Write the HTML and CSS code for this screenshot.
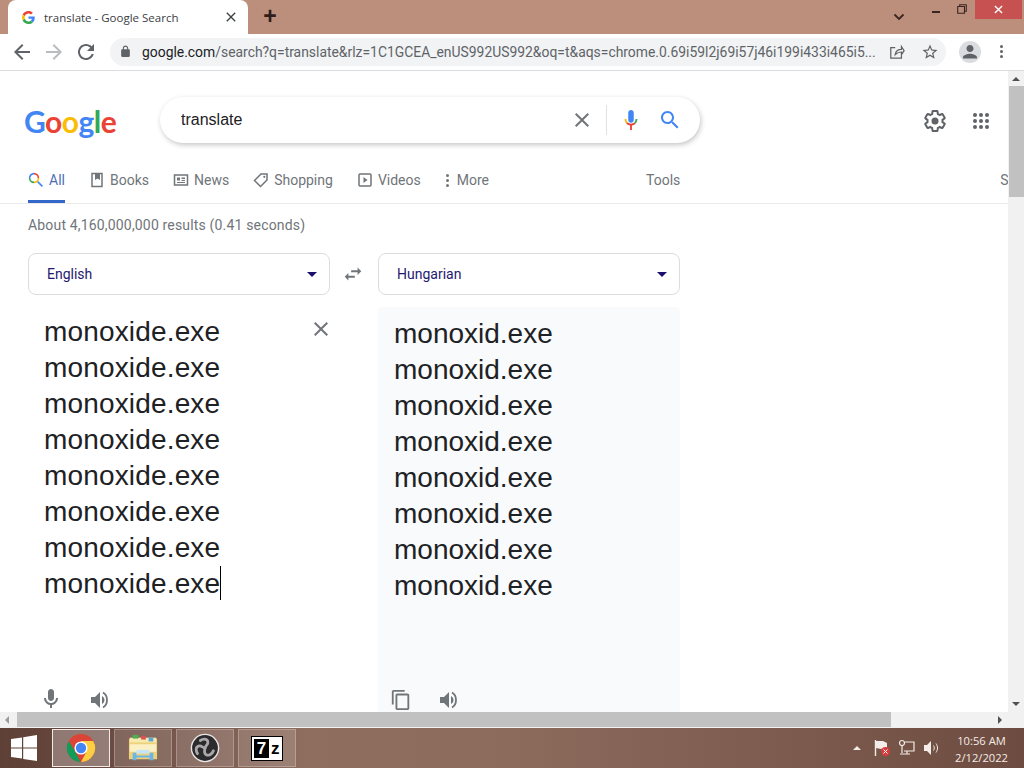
FILE: index.html
```html
<!DOCTYPE html>
<html lang="en">
<head>
  <meta charset="UTF-8" />
  <title>translate - Google Search</title>
  <link rel="stylesheet" href="styles.css">
</head>
<body>
  <svg class="sprite" width="0" height="0">
    <symbol id="i-back" viewBox="0 0 24 24"><path d="M20 11H7.83l5.59-5.59L12 4l-8 8 8 8 1.41-1.41L7.83 13H20v-2z"/></symbol>
    <symbol id="i-reload" viewBox="0 0 24 24"><path d="M17.65 6.35C16.2 4.9 14.21 4 12 4c-4.42 0-7.99 3.58-7.99 8s3.57 8 7.99 8c3.73 0 6.84-2.55 7.73-6h-2.08c-.82 2.33-3.04 4-5.65 4-3.31 0-6-2.69-6-6s2.69-6 6-6c1.66 0 3.14.69 4.22 1.78L13 11h7V4l-2.35 2.35z"/></symbol>
    <symbol id="i-lock" viewBox="0 0 24 24"><path d="M18 8h-1V6c0-2.76-2.24-5-5-5S7 3.24 7 6v2H6c-1.1 0-2 .9-2 2v10c0 1.1.9 2 2 2h12c1.1 0 2-.9 2-2V10c0-1.1-.9-2-2-2zM9 6c0-1.66 1.34-3 3-3s3 1.34 3 3v2H9V6z"/></symbol>
    <symbol id="i-star" viewBox="0 0 24 24"><path d="M22 9.24l-7.19-.62L12 2 9.19 8.63 2 9.24l5.46 4.73L5.82 21 12 17.27 18.18 21l-1.63-7.03L22 9.24zM12 15.4l-3.76 2.27 1-4.28-3.32-2.88 4.38-.38L12 6.1l1.71 4.04 4.38.38-3.32 2.88 1 4.28L12 15.4z"/></symbol>
    <symbol id="i-close" viewBox="0 0 24 24"><path d="M19 6.41L17.59 5 12 10.59 6.41 5 5 6.41 10.59 12 5 17.59 6.41 19 12 13.41 17.59 19 19 17.59 13.41 12 19 6.41z"/></symbol>
    <symbol id="i-search" viewBox="0 0 24 24"><path d="M15.5 14h-.79l-.28-.27C15.41 12.59 16 11.11 16 9.5 16 5.91 13.09 3 9.5 3S3 5.91 3 9.5 5.91 16 9.5 16c1.61 0 3.09-.59 4.23-1.57l.27.28v.79l5 4.99L20.49 19l-4.99-5zm-6 0C7.01 14 5 11.99 5 9.5S7.01 5 9.5 5 14 7.01 14 9.5 11.99 14 9.5 14z"/></symbol>
    <symbol id="i-mic" viewBox="0 0 24 24"><path d="M12 14c1.66 0 3-1.34 3-3V5c0-1.66-1.34-3-3-3S9 3.34 9 5v6c0 1.66 1.34 3 3 3z"/><path d="M17 11c0 2.76-2.24 5-5 5s-5-2.24-5-5H5c0 3.53 2.61 6.43 6 6.92V21h2v-3.08c3.39-.49 6-3.39 6-6.92h-2z"/></symbol>
    <symbol id="i-volume" viewBox="2 3 18 18"><path d="M3 9v6h4l5 5V4L7 9H3zm13.500 3c0-1.770-1.020-3.290-2.500-4.030v8.050c1.480-.73 2.500-2.250 2.500-4.020z"/><path d="M15 4.500c2.800 1.600 4 4.300 4 7.500s-1.200 5.900-4 7.500" fill="none" stroke="#70757a" stroke-width="1.800"/></symbol>
    <symbol id="i-copy" viewBox="0 0 24 24"><path d="M16 1H4c-1.1 0-2 .9-2 2v14h2V3h12V1zm3 4H8c-1.1 0-2 .9-2 2v14c0 1.1.9 2 2 2h11c1.1 0 2-.9 2-2V7c0-1.1-.9-2-2-2zm0 16H8V7h11v14z"/></symbol>
    <symbol id="i-swap" viewBox="0 0 24 24"><path d="M6.99 11L3 15l3.99 4v-3H14v-2H6.99v-3zM21 9l-4-4v3h-7v2h7v3l4-4z"/></symbol>
  </svg>

  <div class="tabstrip">
    <div class="tab">
      <svg class="favicon" viewBox="0 0 48 48">
        <path fill="#EA4335" d="M24 9.500c3.500 0 6.700 1.200 9.200 3.600l6.900-6.900C35.900 2.400 30.500 0 24 0 14.600 0 6.500 5.400 2.600 13.200l8 6.200C12.400 13.700 17.700 9.500 24 9.500z"/>
        <path fill="#4285F4" d="M47 24.500c0-1.600-.1-3.100-.4-4.500H24v9h12.900c-.6 3-2.200 5.500-4.700 7.200l7.700 6C44.400 37.900 47 31.800 47 24.500z"/>
        <path fill="#FBBC05" d="M10.500 28.600c-.5-1.400-.8-3-.8-4.600s.3-3.200.8-4.600l-8-6.200C.9 16.500 0 20.100 0 24s.9 7.500 2.600 10.800l7.900-6.200z"/>
        <path fill="#34A853" d="M24 48c6.500 0 11.900-2.100 15.900-5.800l-7.700-6c-2.100 1.400-4.900 2.300-8.200 2.300-6.300 0-11.600-4.200-13.500-9.900l-8 6.200C6.500 42.600 14.600 48 24 48z"/>
      </svg>
      <span class="tab-title">translate - Google Search</span>
      <svg class="tab-close"><use href="#i-close"/></svg>
    </div>
    <div class="new-tab">+</div>
    <div class="window-btns">
      <svg class="tab-menu" viewBox="0 0 12 8"><path d="M1.500 1.500L6 6l4.500-4.500" fill="none" stroke="#3a2520" stroke-width="1.800"/></svg>
      <div class="win-min"></div>
      <svg class="win-max" viewBox="0 0 11 11"><path d="M3 2.500V.8h7.200V8H8.300M.8 2.800h7.400V10.200H.8z" fill="none" stroke="#3a2520" stroke-width="1.200"/></svg>
      <div class="win-close"><svg viewBox="0 0 10 10"><path d="M1 1l8 8M9 1l-8 8" stroke="#fff" stroke-width="1.500"/></svg></div>
    </div>
  </div>

  <div class="toolbar">
    <svg class="tool-icon"><use href="#i-back"/></svg>
    <svg class="tool-icon faded flip"><use href="#i-back"/></svg>
    <svg class="tool-icon"><use href="#i-reload"/></svg>
    <div class="omnibox">
      <svg class="lock"><use href="#i-lock"/></svg>
      <span class="url"><b>google.com</b>/search?q=translate&amp;rlz=1C1GCEA_enUS992US992&amp;oq=t&amp;aqs=chrome.0.69i59l2j69i57j46i199i433i465i5...</span>
      <svg class="share" viewBox="0 0 18 18"><path d="M7 4H2v12h12v-3M7 12c.5-4 3-6 7-6V3l3 4.500L14 12V9c-3 0-5 1-7 3z" fill="none" stroke="#5f6368" stroke-width="1.400"/></svg>
      <svg class="star"><use href="#i-star"/></svg>
    </div>
    <div class="avatar"><svg viewBox="0 0 20 20"><path d="M10 10c1.800 0 3.200-1.400 3.200-3.200S11.800 3.600 10 3.600 6.800 5 6.800 6.800 8.200 10 10 10zm0 1.600c-2.100 0-6.400 1.100-6.400 3.200V16h12.800v-1.200c0-2.100-4.300-3.200-6.400-3.200z"/></svg></div>
    <div class="kebab"><i></i><i></i><i></i></div>
  </div>

  <div class="viewport">
    <div class="page">
      <header class="header">
        <div class="logo"><span class="blue">G</span><span class="red">o</span><span class="yellow">o</span><span class="blue">g</span><span class="green">l</span><span class="red">e</span></div>
        <div class="searchbox">
          <span class="query">translate</span>
          <svg class="sb-clear"><use href="#i-close"/></svg>
          <span class="sb-divider"></span>
          <svg class="sb-mic" viewBox="0 0 24 24">
            <path fill="#4285f4" d="M12 15c1.700 0 3-1.300 3-3V4c0-1.700-1.300-3-3-3S9 2.300 9 4v8c0 1.700 1.300 3 3 3z"/>
            <path fill="#fbbc05" d="M5 11h2c0 1.300.4 2.400 1.200 3.400l-1.400 1.400C5.700 14.500 5 12.800 5 11z"/>
            <path fill="#ea4335" d="M8.200 14.400c.9 1 2.300 1.600 3.800 1.600s2.900-.6 3.800-1.600l1.400 1.400c-1 1.100-2.500 1.900-4.200 2.100V23h-2v-5.100c-1.700-.2-3.200-1-4.200-2.100z"/>
            <path fill="#34a853" d="M17 11h2c0 1.800-.7 3.500-1.800 4.800l-1.400-1.400c.8-1 1.200-2.100 1.200-3.400z"/>
          </svg>
          <svg class="sb-search"><use href="#i-search"/></svg>
        </div>
        <svg class="gear" viewBox="0 0 24 24">
          <path fill="none" stroke="#5f6368" stroke-width="2" d="M19.430 12.980c.04-.32.07-.64.07-.98s-.03-.66-.07-.98l2.110-1.650c.19-.15.24-.42.12-.64l-2-3.460c-.12-.22-.39-.3-.61-.22l-2.490 1c-.52-.4-1.080-.73-1.690-.98l-.38-2.650C14.460 2.180 14.250 2 14 2h-4c-.25 0-.46.18-.49.42l-.38 2.650c-.61.25-1.170.59-1.690.98l-2.490-1c-.23-.09-.49 0-.61.22l-2 3.460c-.13.22-.07.49.12.64l2.110 1.650c-.04.32-.07.65-.07.98s.03.66.07.98l-2.110 1.650c-.19.15-.24.42-.12.64l2 3.460c.12.22.39.3.61.22l2.490-1c.52.4 1.080.73 1.690.98l.38 2.650c.03.24.24.42.49.42h4c.25 0 .46-.18.49-.42l.38-2.650c.61-.25 1.170-.59 1.690-.98l2.490 1c.23.09.49 0 .61-.22l2-3.460c.12-.22.07-.49-.12-.64l-2.110-1.650z"/>
          <circle cx="12" cy="12" r="3.500" fill="#5f6368"/>
        </svg>
        <div class="apps"><i></i><i></i><i></i><i></i><i></i><i></i><i></i><i></i><i></i></div>
      </header>

      <nav class="nav">
        <a class="nav-item active">
          <svg class="nav-icon" viewBox="2 2 20 20">
            <path fill="none" stroke="#4285f4" stroke-width="2" d="M4 9.500A5.500 5.500 0 0 1 9.500 4"/>
            <path fill="none" stroke="#ea4335" stroke-width="2" d="M9.500 4A5.500 5.500 0 0 1 15 9.500"/>
            <path fill="none" stroke="#34a853" stroke-width="2" d="M4 9.500A5.500 5.500 0 0 0 9.500 15"/>
            <path fill="none" stroke="#fbbc05" stroke-width="2" d="M9.500 15A5.500 5.500 0 0 0 15 9.500"/>
            <path stroke="#4285f4" stroke-width="2" d="M14 14l6 6"/>
          </svg>All</a>
        <a class="nav-item">
          <svg class="nav-icon" viewBox="0 0 16 16"><path fill="none" stroke="#70757a" stroke-width="1.500" d="M3 1.500h10v13H3z"/><path fill="#70757a" d="M6 2h5v6L8.500 6.500 6 8z"/></svg>Books</a>
        <a class="nav-item">
          <svg class="nav-icon" viewBox="0 0 16 16"><path fill="none" stroke="#70757a" stroke-width="1.500" d="M1.500 3h13v10h-13z"/><path fill="#70757a" d="M4 5.500h3v3H4zM8.500 5.500H12V7H8.500zM8.500 8H12v1H8.500zM4 10h8v1H4z"/></svg>News</a>
        <a class="nav-item">
          <svg class="nav-icon" viewBox="0 0 16 16"><path fill="none" stroke="#70757a" stroke-width="1.500" d="M1.500 8.500L8 2h6v6l-6.500 6.500z"/><circle cx="11.300" cy="4.800" r="1.100" fill="#70757a"/></svg>Shopping</a>
        <a class="nav-item">
          <svg class="nav-icon" viewBox="0 0 16 16"><rect x="2" y="2" width="12" height="12" rx="1" fill="none" stroke="#70757a" stroke-width="1.500"/><path fill="#70757a" d="M6.500 5l4 3-4 3z"/></svg>Videos</a>
        <a class="nav-item">
          <span class="nav-dots"><i></i><i></i><i></i></span>More</a>
        <a class="nav-item tools">Tools</a>
        <a class="nav-item cut">S</a>
      </nav>

      <main class="results">
        <div class="stats">About 4,160,000,000 results (0.41 seconds)</div>
        <div class="lang-row">
          <div class="lang-select">English<span class="caret"></span></div>
          <svg class="swap"><use href="#i-swap"/></svg>
          <div class="lang-select">Hungarian<span class="caret"></span></div>
        </div>
        <div class="panels">
          <div class="panel source">
            <div class="source-top">
              <div class="lines">
                <div>monoxide.exe</div>
                <div>monoxide.exe</div>
                <div>monoxide.exe</div>
                <div>monoxide.exe</div>
                <div>monoxide.exe</div>
                <div>monoxide.exe</div>
                <div>monoxide.exe</div>
                <div><span class="caret-text">monoxide.exe</span></div>
              </div>
              <svg class="panel-clear"><use href="#i-close"/></svg>
            </div>
            <div class="panel-tools">
              <svg class="ptool mic"><use href="#i-mic"/></svg>
              <svg class="ptool vol"><use href="#i-volume"/></svg>
            </div>
          </div>
          <div class="panel target">
            <div class="lines">
              <div>monoxid.exe</div>
              <div>monoxid.exe</div>
              <div>monoxid.exe</div>
              <div>monoxid.exe</div>
              <div>monoxid.exe</div>
              <div>monoxid.exe</div>
              <div>monoxid.exe</div>
              <div>monoxid.exe</div>
            </div>
            <div class="panel-tools">
              <svg class="ptool copy"><use href="#i-copy"/></svg>
              <svg class="ptool vol"><use href="#i-volume"/></svg>
            </div>
          </div>
        </div>
      </main>
    </div>

    <div class="vscroll">
      <span class="arrow up"></span>
      <div class="vthumb"></div>
      <span class="vspace"></span>
      <span class="arrow down"></span>
    </div>
  </div>

  <div class="hscroll">
    <span class="arrow left"></span>
    <div class="hthumb"></div>
    <span class="hspace"></span>
    <span class="arrow right"></span>
  </div>

  <div class="taskbar">
    <svg class="start" viewBox="0 0 26 26"><path fill="#fff" d="M0 4l11-1.600V12.400H0zM12.200 2.200L26 0v12.400H12.200zM0 13.600h11v10L0 22zM12.200 13.600H26V26l-13.800-2z"/></svg>
    <div class="task-btn current">
      <svg viewBox="0 0 32 32">
        <circle cx="16" cy="16" r="15" fill="#db4437"/>
        <path fill="#0f9d58" d="M16 31A15 15 0 0 1 3 8.500L10 20.500l5.500 10.500z"/>
        <path fill="#ffcd40" d="M16 31a15 15 0 0 0 13-22.500H16l5.500 12z"/>
        <circle cx="16" cy="16" r="7" fill="#fff"/>
        <circle cx="16" cy="16" r="5.500" fill="#4285f4"/>
      </svg>
    </div>
    <div class="task-btn">
      <svg viewBox="0 0 32 32">
        <path fill="#ecd27a" d="M1 6h30v22H1z"/>
        <path fill="#f7e9b0" d="M2 5h28v5H2z"/>
        <path fill="#4caf50" d="M5 2h6v4H5z"/>
        <path fill="#d9534f" d="M14 3h5v4h-5z"/>
        <path fill="#5aa7d8" d="M22 5h5v4h-5z"/>
        <path fill="#fbf0c4" d="M2 12h28v8H2z"/>
        <path fill="#6db5e6" d="M5 21h4v8H5zM23 21h4v8h-4zM9 24h14v2H9z"/>
        <path fill="#c5e4f6" d="M9 18h14v4H9z"/>
      </svg>
    </div>
    <div class="task-btn">
      <svg viewBox="0 0 32 32">
        <circle cx="16" cy="16" r="14.500" fill="#2b2b2e" stroke="#e8e6e4" stroke-width="1.500"/>
        <g fill="none" stroke="#a9a7a8" stroke-width="3" stroke-linecap="round">
          <path d="M11 8c3-2 7-2 8 1s-3 5-3 7"/>
          <path d="M8 22c-2-3-2-7 1-8s5 2 7 2"/>
          <path d="M25 19c-1 3-5 6-8 4s-1-5-1-7"/>
        </g>
      </svg>
    </div>
    <div class="task-btn">
      <div class="sevenzip"><span class="seven">7</span><span class="zed">z</span></div>
    </div>
    <div class="tray">
      <span class="tray-up"></span>
      <svg class="flag" viewBox="0 0 18 18">
        <path d="M2.500 1v16" stroke="#f4ece8" stroke-width="1.400"/>
        <path d="M3 2h7l4 2v6H8L3 9z" fill="#f4ece8"/>
        <circle cx="12.500" cy="12.500" r="4.500" fill="#d83b3b"/>
        <path d="M10.500 10.500l4 4M14.500 10.500l-4 4" stroke="#fff" stroke-width="1"/>
      </svg>
      <svg class="net" viewBox="0 0 18 18" fill="none" stroke="#f4ece8" stroke-width="1.200">
        <circle cx="4" cy="4" r="2.500"/>
        <path d="M4 6.500V14M7 3h9v9H6M2 15h10M9 12v3"/>
      </svg>
      <svg class="speaker" viewBox="0 0 18 18">
        <path fill="#f4ece8" d="M1 6h3l4-4v14l-4-4H1z"/>
        <path fill="none" stroke="#f4ece8" d="M10.500 6.500c1 1.500 1 3.500 0 5M13 4.500c2 3 2 6 0 9"/>
      </svg>
      <div class="clock"><div>10:56 AM</div><div>2/12/2022</div></div>
    </div>
  </div>
</body>
</html>
```

FILE: styles.css
```css
* {
  box-sizing: border-box;
}

html, body {
  margin: 0;
  height: 768px;
  overflow: hidden;
}

body {
  width: 1024px;
  display: flex;
  flex-direction: column;
  font-family: 'Liberation Sans', Arial, sans-serif;
  background: white;
}

.sprite {
  display: none;
}

/* title bar */

.tabstrip {
  height: 34px;
  flex: none;
  display: flex;
  background: #bc8e7c;
}

.tab {
  width: 240px;
  height: 34px;
  margin-left: 8px;
  padding: 0 14px;
  display: flex;
  align-items: center;
  background: white;
  border-radius: 8px 8px 0 0;
}

.favicon {
  width: 13px;
  height: 13px;
  flex: none;
}

.tab-title {
  margin-left: 9px;
  flex: 1;
  font-size: 11.500px;
  color: #3c4043;
  font-family: 'Open Sans', sans-serif;
  white-space: nowrap;
}

.tab-close {
  width: 16px;
  height: 16px;
  margin-right: -5px;
  fill: #3c4043;
}

.new-tab {
  width: 28px;
  margin-left: 8px;
  font-size: 23px;
  font-weight: bold;
  line-height: 32px;
  text-align: center;
  color: #2e1d18;
}

.window-btns {
  margin: 0 2px 0 auto;
  display: flex;
  align-items: flex-start;
}

.tab-menu {
  width: 12px;
  height: 8px;
  margin: 13px 27px 0 0;
}

.win-min {
  width: 8px;
  height: 2px;
  margin: 11px 17px 0 0;
  background: #3a2520;
}

.win-max {
  width: 10px;
  height: 10px;
  margin: 4px 8px 0 0;
}

.win-close {
  width: 47px;
  height: 19px;
  display: flex;
  align-items: center;
  justify-content: center;
  background: #c75050;
}

.win-close svg {
  width: 9px;
  height: 9px;
}

/* toolbar */

.toolbar {
  height: 37px;
  flex: none;
  padding: 0 0 1px 10px;
  display: flex;
  align-items: center;
  background: white;
  border-bottom: 1px solid #dadce0;
}

.tool-icon {
  width: 24px;
  height: 24px;
  margin-right: 8px;
  fill: #5f6368;
}

.tool-icon.faded {
  fill: #babcbe;
}

.tool-icon.flip {
  transform: scaleX(-1);
}

.omnibox {
  width: 836px;
  height: 28px;
  margin-left: 4px;
  padding: 0 6px 0 9px;
  display: flex;
  align-items: center;
  background: #f1f3f4;
  border-radius: 14px;
}

.lock {
  width: 13px;
  height: 13px;
  flex: none;
  fill: #5f6368;
}

.url {
  margin-left: 10px;
  flex: 1;
  font-family: 'Roboto', sans-serif;
  font-size: 13.900px;
  color: #5f6368;
  white-space: nowrap;
}

.url b {
  font-weight: normal;
  color: #202124;
}

.share {
  width: 16px;
  height: 16px;
  margin-left: 8px;
  flex: none;
}

.star {
  width: 18px;
  height: 18px;
  margin: 0 1px 0 16px;
  flex: none;
  fill: #5f6368;
}

.avatar {
  width: 22px;
  height: 22px;
  margin-left: 13px;
  border-radius: 50%;
  background: #dadce0;
}

.avatar svg {
  display: block;
  width: 22px;
  height: 22px;
  fill: #5f6368;
}

.kebab {
  width: 4px;
  margin-left: 19px;
  display: flex;
  flex-direction: column;
  gap: 2px;
}

.kebab i {
  width: 3px;
  height: 3px;
  border-radius: 50%;
  background: #5f6368;
}

/* page area */

.viewport {
  height: 641px;
  flex: none;
  display: flex;
  overflow: hidden;
}

.page {
  width: 1008px;
  flex: none;
  overflow: hidden;
}

.header {
  height: 99px;
  padding: 26px 0 0 24px;
  display: flex;
  align-items: flex-start;
}

.logo {
  width: 136px;
  margin-top: 3px;
  font-family: 'Lato', sans-serif;
  font-weight: bold;
  font-size: 30px;
  line-height: 42px;
  letter-spacing: -0.500px;
}

.blue { color: #4285f4; }
.red { color: #ea4335; }
.yellow { color: #fbbc05; }
.green { color: #34a853; }

.searchbox {
  width: 540px;
  height: 46px;
  padding: 0 18px 0 21px;
  display: flex;
  align-items: center;
  background: white;
  border-radius: 23px;
  box-shadow: 1px 2px 5px rgba(32, 33, 36, 0.26);
}

.query {
  flex: 1;
  font-size: 16px;
  color: #202124;
}

.sb-clear {
  width: 24px;
  height: 24px;
  fill: #70757a;
}

.sb-divider {
  width: 1px;
  height: 30px;
  margin: 0 13px 0 12px;
  background: #dfe1e5;
}

.sb-mic {
  width: 22px;
  height: 22px;
  margin-right: 16px;
}

.sb-search {
  width: 24px;
  height: 24px;
  fill: #4285f4;
}

.gear {
  width: 24px;
  height: 24px;
  margin: 12px 0 0 223px;
}

.apps {
  width: 16px;
  height: 16px;
  margin: 16px 0 0 26px;
  display: grid;
  grid-template-columns: repeat(3, 4px);
  gap: 2px;
}

.apps i {
  width: 4px;
  height: 4px;
  border-radius: 50%;
  background: #5f6368;
}

.nav {
  height: 34px;
  padding-left: 28px;
  display: flex;
  font-family: 'Roboto', sans-serif;
  font-size: 14px;
  color: #70757a;
  border-bottom: 1px solid #ebebeb;
}

.nav-item {
  height: 33px;
  margin-right: 24px;
  display: flex;
  align-items: flex-start;
  line-height: 20px;
  white-space: nowrap;
}

.nav-item.active {
  color: #4d6eb8;
  border-bottom: 3px solid #3367c9;
}

.nav-icon {
  width: 16px;
  height: 16px;
  margin: 2px 5px 0 0;
  flex: none;
}

.nav-dots {
  width: 4px;
  margin: 4px 7px 0 1px;
  display: flex;
  flex-direction: column;
  gap: 2px;
}

.nav-dots i {
  width: 3px;
  height: 3px;
  border-radius: 50%;
  background: #70757a;
}

.nav-item.tools {
  margin: 0 0 0 133px;
}

.nav-item.cut {
  margin: 0 0 0 320px;
}

.results {
  padding: 11px 0 0 28px;
}

.stats {
  height: 20px;
  font-family: 'Roboto', sans-serif;
  font-size: 14px;
  letter-spacing: 0.170px;
  line-height: 20px;
  color: #70757a;
}

.lang-row {
  margin-top: 18px;
  display: flex;
  align-items: center;
}

.lang-select {
  width: 302px;
  height: 42px;
  padding: 0 12px 0 18px;
  display: flex;
  align-items: center;
  justify-content: space-between;
  font-family: 'Roboto', sans-serif;
  font-size: 14px;
  color: #1f1a6e;
  border: 1px solid #dadce0;
  border-radius: 8px;
}

.caret {
  width: 0;
  height: 0;
  border-left: 5px solid transparent;
  border-right: 5px solid transparent;
  border-top: 5px solid #1a0f6b;
}

.swap {
  width: 22px;
  height: 22px;
  margin: 0 14px 0 12px;
  fill: #70757a;
}

.panels {
  margin-top: 12px;
  display: flex;
  gap: 48px;
}

.panel {
  width: 302px;
  height: 420px;
  font-size: 28px;
  line-height: 36px;
  color: #202124;
}

.source {
  padding: 7px 0 0 16px;
}

.source .lines {
  letter-spacing: 0.160px;
}

.source-top {
  display: flex;
  align-items: flex-start;
  height: 375px;
}

.lines {
  flex: 1;
}

.caret-text {
  display: inline-block;
  height: 34px;
  line-height: 36px;
  border-right: 1px solid #000;
}

.panel-clear {
  width: 24px;
  height: 24px;
  margin: 3px -3px 0 0;
  fill: #70757a;
}

.target {
  padding: 9px 0 0 16px;
  background: #f8fafb;
  border-radius: 4px 4px 0 0;
}

.target .lines {
  height: 373px;
}

.panel-tools {
  display: flex;
  align-items: center;
}

.ptool {
  width: 24px;
  height: 24px;
  fill: #70757a;
}

.ptool.mic {
  margin: -2px 0 0 -5px;
}

.ptool.vol {
  width: 18px;
  height: 18px;
  margin-left: 27px;
}

.ptool.copy {
  width: 22px;
  height: 22px;
  margin-left: -4px;
}

/* scrollbars */

.vscroll {
  width: 16px;
  flex: none;
  display: flex;
  flex-direction: column;
  align-items: center;
  background: #f1f1f1;
}

.vthumb {
  width: 15px;
  height: 111px;
  margin-left: 1px;
  background: #c1c1c1;
}

.vspace,
.hspace {
  flex: 1;
}

.arrow {
  flex: none;
  width: 0;
  height: 0;
}

.arrow.up {
  margin: 6px 0 5px;
  border-left: 4px solid transparent;
  border-right: 4px solid transparent;
  border-bottom: 4px solid #505050;
}

.arrow.down {
  margin-bottom: 6px;
  border-left: 4px solid transparent;
  border-right: 4px solid transparent;
  border-top: 4px solid #505050;
}

.hscroll {
  height: 16px;
  flex: none;
  padding-bottom: 1px;
  display: flex;
  align-items: center;
  background: #f1f1f1;
}

.hthumb {
  width: 874px;
  height: 15px;
  margin-left: 8px;
  background: #c1c1c1;
}

.arrow.left {
  margin-left: 5px;
  border-top: 4px solid transparent;
  border-bottom: 4px solid transparent;
  border-right: 4px solid #9a9a9a;
}

.arrow.right {
  margin-right: 22px;
  border-top: 4px solid transparent;
  border-bottom: 4px solid transparent;
  border-left: 4px solid #505050;
}

/* windows taskbar */

.taskbar {
  height: 40px;
  flex: none;
  padding: 1px 0 1px 11px;
  display: flex;
  align-items: center;
  background: linear-gradient(to right, #5f4036, #6a4a40 10%, #8f6e60 30%, #8c6a5c 50%, #7b5a4d 80%, #6d4b40);
}

.start {
  width: 26px;
  height: 26px;
  margin-right: 15px;
  flex: none;
}

.task-btn {
  width: 58px;
  height: 38px;
  margin-right: 4px;
  flex: none;
  display: flex;
  align-items: center;
  justify-content: center;
  background: rgba(255, 255, 255, 0.14);
  border: 1px solid rgba(255, 255, 255, 0.25);
}

.task-btn.current {
  background: rgba(255, 255, 255, 0.28);
  border-color: rgba(255, 255, 255, 0.85);
}

.task-btn svg {
  width: 30px;
  height: 30px;
}

.sevenzip {
  width: 32px;
  height: 25px;
  padding: 2px;
  display: flex;
  gap: 2px;
  background: white;
  border: 1px solid black;
  font-family: 'Liberation Sans', sans-serif;
  font-weight: bold;
  font-size: 17px;
  line-height: 19px;
}

.seven {
  width: 15px;
  text-align: center;
  color: white;
  background: black;
}

.zed {
  color: black;
}

.tray {
  margin-left: auto;
  display: flex;
  align-items: center;
  color: #f4ece8;
}

.tray-up {
  width: 0;
  height: 0;
  margin-right: 12px;
  border-left: 4px solid transparent;
  border-right: 4px solid transparent;
  border-bottom: 4px solid #f4ece8;
}

.flag,
.net,
.speaker {
  width: 18px;
  height: 18px;
  margin-right: 7px;
}

.clock {
  width: 55px;
  margin: 2px 15px 0 6px;
  font-family: 'Open Sans', sans-serif;
  font-size: 11.200px;
  line-height: 17px;
  text-align: center;
  white-space: nowrap;
}
```
